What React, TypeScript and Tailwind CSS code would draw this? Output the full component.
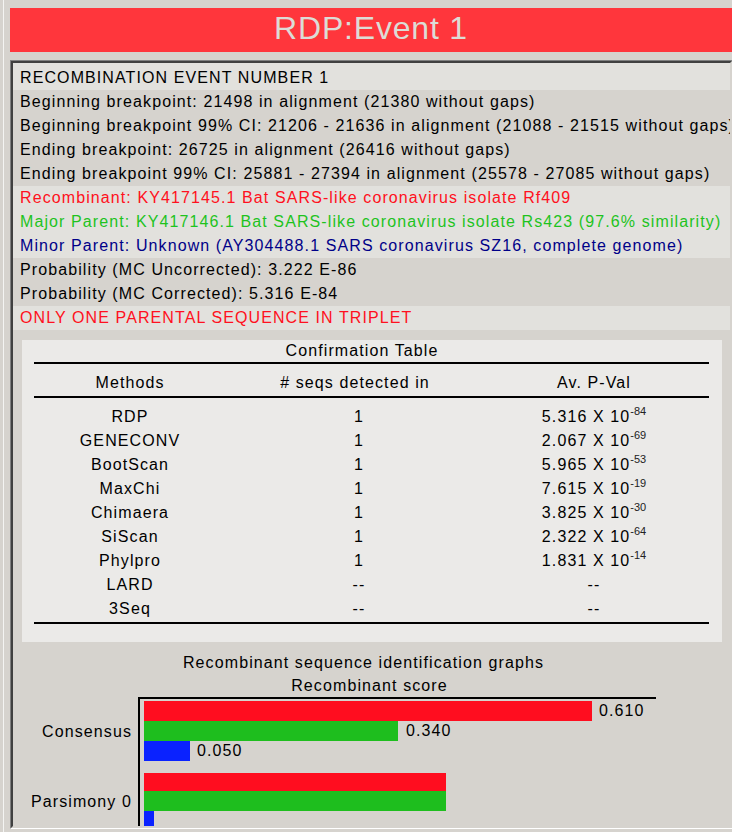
import React from "react";

const rows: { text: string; color: string; light: boolean }[] = [
  { text: "RECOMBINATION EVENT NUMBER 1", color: "text-black", light: true },
  { text: "Beginning breakpoint: 21498 in alignment (21380 without gaps)", color: "text-black", light: false },
  { text: "Beginning breakpoint 99% CI: 21206 - 21636 in alignment (21088 - 21515 without gaps)", color: "text-black", light: false },
  { text: "Ending breakpoint: 26725 in alignment (26416 without gaps)", color: "text-black", light: false },
  { text: "Ending breakpoint 99% CI: 25881 - 27394 in alignment (25578 - 27085 without gaps)", color: "text-black", light: false },
  { text: "Recombinant: KY417145.1 Bat SARS-like coronavirus isolate Rf409", color: "text-[#ff1020]", light: true },
  { text: "Major Parent: KY417146.1 Bat SARS-like coronavirus isolate Rs423 (97.6% similarity)", color: "text-[#1ec31e]", light: true },
  { text: "Minor Parent: Unknown (AY304488.1 SARS coronavirus SZ16, complete genome)", color: "text-[#000088]", light: true },
  { text: "Probability (MC Uncorrected): 3.222 E-86", color: "text-black", light: false },
  { text: "Probability (MC Corrected): 5.316 E-84", color: "text-black", light: false },
  { text: "ONLY ONE PARENTAL SEQUENCE IN TRIPLET", color: "text-[#ff1020]", light: true },
];

const table: { m: string; n: string; v?: string; e?: string }[] = [
  { m: "RDP", n: "1", v: "5.316", e: "-84" },
  { m: "GENECONV", n: "1", v: "2.067", e: "-69" },
  { m: "BootScan", n: "1", v: "5.965", e: "-53" },
  { m: "MaxChi", n: "1", v: "7.615", e: "-19" },
  { m: "Chimaera", n: "1", v: "3.825", e: "-30" },
  { m: "SiScan", n: "1", v: "2.322", e: "-64" },
  { m: "Phylpro", n: "1", v: "1.831", e: "-14" },
  { m: "LARD", n: "--" },
  { m: "3Seq", n: "--" },
];

export default function App() {
  return (
    <div className="w-[732px] h-[832px] bg-[#d6d3ce] pl-[3px] overflow-hidden font-['Liberation_Sans',Arial,sans-serif] text-[16px] tracking-[1.1px] text-black">
      <div className="h-full border-l border-[#f4f4f2] pl-[6px] pt-[8px]">
        {/* Title bar */}
        <div className="h-[44px] bg-[#ff363c] flex items-center justify-center pb-[4px]">
          <span className="text-[32px] leading-none tracking-[0.8px] text-[#dcdcd6]">RDP:Event 1</span>
        </div>

        {/* Panel */}
        <div className="mt-[8px] h-[769px] border-l border-t border-b border-[#808080] border-b-white">
          <div className="h-full border-l-2 border-t-2 border-r-2 border-b-2 border-[#404040] border-r-[#d6d3ce] border-b-[#d6d3ce] bg-[#d6d3ce] overflow-hidden">
            {/* Text rows */}
            <div>
              {rows.map((r, i) => (
                <div
                  key={i}
                  className={`${i === 0 ? "pt-[3px]" : ""} ${r.light ? "bg-[#e2e1dd]" : "bg-[#d6d3ce]"} ${r.color} pl-[7px] leading-[24px] whitespace-nowrap overflow-hidden`}
                >
                  {r.text}
                </div>
              ))}
            </div>

            {/* Confirmation table */}
            <div className="mt-[10px] ml-[9px] w-[700px] h-[302px] bg-[#ebeae8] flex flex-col shrink-0">
              <div className="h-[22px] leading-[22px] text-center pr-[20px] shrink-0">Confirmation Table</div>
              <div className="ml-[12px] w-[675px] h-[2px] bg-black shrink-0" />
              <div className="ml-[12px] h-[32px] pt-[7px] grid grid-cols-[192px_264px_208px] leading-[24px] text-center shrink-0">
                <div>Methods</div>
                <div className="pr-[6px]">{"# seqs detected in"}</div>
                <div>Av. P-Val</div>
              </div>
              <div className="ml-[12px] w-[675px] h-[2px] bg-black shrink-0" />
              <div className="ml-[12px] pt-[7px] flex flex-col shrink-0">
                {table.map((t) => (
                  <div key={t.m} className="grid grid-cols-[192px_264px_208px] h-[24px] leading-[24px] text-center">
                    <div>{t.m}</div>
                    <div className="pl-[2px]">{t.n}</div>
                    <div>
                      {t.v ? (
                        <>
                          {t.v} X 10
                          <span className="text-[11px] tracking-[0px] align-[7px] leading-none text-[#222]">{t.e}</span>
                        </>
                      ) : (
                        "--"
                      )}
                    </div>
                  </div>
                ))}
              </div>
              <div className="ml-[12px] mt-[1px] w-[675px] h-[2px] bg-black shrink-0" />
            </div>

            {/* Graphs */}
            <div className="mt-[10px] h-[22px] leading-[22px] text-center pr-[16px] whitespace-nowrap">
              Recombinant sequence identification graphs
            </div>
            <div className="h-[23px] leading-[23px] text-center pr-[4px]">Recombinant score</div>
            <div className="flex">
              <div className="w-[125px] pr-[6px] flex flex-col items-end">
                <div className="mt-[23px] leading-[24px]">Consensus</div>
                <div className="mt-[46px] leading-[24px]">Parsimony 0</div>
              </div>
              <div className="w-[518px] border-l-2 border-t-2 border-black pt-[2px] pl-[4px] flex flex-col">
                <div className="flex items-center h-[20px]">
                  <div className="w-[448px] h-[20px] bg-[#ff0d1f]" />
                  <span className="ml-[7px] leading-none">0.610</span>
                </div>
                <div className="flex items-center h-[20px]">
                  <div className="w-[254px] h-[20px] bg-[#1ebe1e]" />
                  <span className="ml-[8px] leading-none">0.340</span>
                </div>
                <div className="flex items-center h-[20px]">
                  <div className="w-[46px] h-[20px] bg-[#0a22ff]" />
                  <span className="ml-[7px] leading-none">0.050</span>
                </div>
                <div className="mt-[12px] w-[302px] h-[18px] bg-[#ff0d1f]" />
                <div className="w-[302px] h-[20px] bg-[#1ebe1e]" />
                <div className="w-[10px] h-[20px] bg-[#0a22ff]" />
              </div>
            </div>
          </div>
        </div>
      </div>
    </div>
  );
}
